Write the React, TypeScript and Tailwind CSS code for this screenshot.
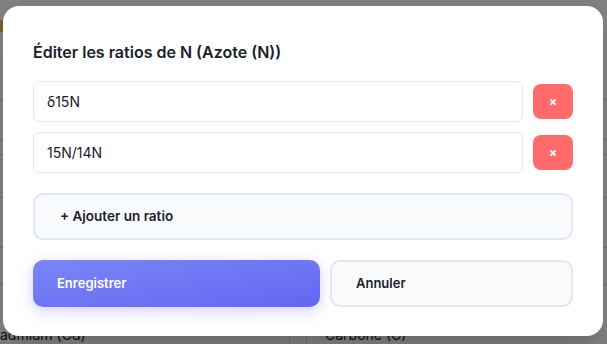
import React from "react";

export default function App() {
  return (
    <div className="relative h-[344px] w-[607px] overflow-hidden bg-white" style={{ fontFamily: "Inter, 'Open Sans', sans-serif" }}>
      {/* underlying page */}
      <div className="flex h-full flex-col text-[#222]">
        <div className="h-[20px]" />
        <div className="h-[12px] w-[4px] bg-[#e8c14a]" />
        <div className="h-[68px] border-b border-[#d8d8d8]" />
        <div className="h-[40px] border-b border-[#d8d8d8]" />
        <div className="h-[15px] border-b border-[#d8d8d8]" />
        <div className="h-[43px] border-b border-[#d8d8d8]" />
        <div className="h-[50px] border-b border-[#d8d8d8]" />
        <div className="h-[37px] border-b border-[#d8d8d8]" />
        <div className="flex flex-1 items-end">
          <div className="w-[290px] border-r border-[#d8d8d8] text-[14px] leading-[18px]">admium (Cd)</div>
          <div className="w-[17px] self-stretch border-r border-[#d8d8d8]" />
          <div className="pl-[18px] text-[14px] leading-[18px]">Carbone (C)</div>
        </div>
      </div>
      <div className="absolute inset-0 bg-black/50" />

      {/* modal */}
      <div className="absolute left-[3px] top-[6px] w-[600px] h-[330px] rounded-2xl bg-white px-[30px] pt-[34px] shadow-xl">
        <h2 className="text-[16px] font-semibold leading-[24px] text-[#1a202c]">Éditer les ratios de N (Azote (N))</h2>
        <div className="mt-[17px] flex flex-col gap-[10px]">
          {["δ15N", "15N/14N"].map((r) => (
            <div key={r} className="flex items-center gap-[10px]">
              <div className="flex h-[41px] flex-1 items-center rounded-md border border-[#e2e8f0] px-[13px] text-[14px] text-[#1a202c]">{r}</div>
              <button className="flex h-[35px] w-[40px] items-center justify-center rounded-lg bg-[#ff6b6b] text-[12px] font-bold leading-none text-white">×</button>
            </div>
          ))}
        </div>
        <button className="mt-[20px] flex h-[47px] w-full items-center rounded-[10px] border-2 border-[#e2e8f0] bg-[#f8fafc] px-[25px] text-[13.5px] font-semibold text-[#1a202c]">
          + Ajouter un ratio
        </button>
        <div className="mt-[20px] flex gap-[10px]">
          <button className="flex h-[47px] w-[287px] items-center rounded-[10px] bg-gradient-to-br from-[#7c85f7] to-[#6366f1] px-[24px] text-[13px] font-semibold text-white shadow-[0_4px_14px_rgba(99,102,241,0.3)]">
            Enregistrer
          </button>
          <button className="flex h-[47px] flex-1 items-center rounded-[10px] border-2 border-[#e2e8f0] bg-[#f8fafc] px-[24px] text-[13px] font-semibold text-[#1a202c]">
            Annuler
          </button>
        </div>
      </div>
    </div>
  );
}
